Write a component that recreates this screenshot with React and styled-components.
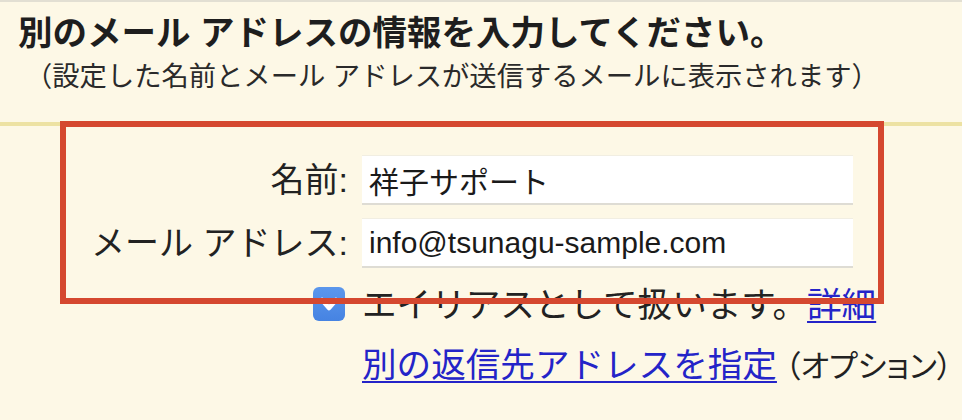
import React from "react";
import styled, { createGlobalStyle } from "styled-components";

const GlobalStyle = createGlobalStyle`
  html, body {
    margin: 0;
    padding: 0;
    background: #fdf8e6;
  }
  body {
    font-family: "Liberation Sans", "Noto Sans CJK JP", sans-serif;
    color: #222;
  }
`;

const Page = styled.div`
  position: relative;
  width: 962px;
  height: 420px;
  overflow: hidden;
  border-top: 2px solid #e2dfd3;
  box-sizing: border-box;
  background: #fdf8e6;
`;

const Header = styled.div`
  padding: 11px 0 0 18px;
`;

const Title = styled.h1`
  margin: 0;
  font-size: 34.5px;
  line-height: 40px;
  font-weight: bold;
  color: #1e1e1e;
`;

const Subtitle = styled.p`
  margin: 7px 0 0 7px;
  font-size: 27.3px;
  line-height: 34px;
  color: #2a2a2a;
  white-space: nowrap;
`;

const Divider = styled.div`
  height: 4px;
  margin-top: 28px;
  background: #ede2a3;
`;

const Form = styled.div`
  display: flex;
  flex-direction: column;
  margin-top: 29px;
`;

const Row = styled.div`
  display: grid;
  grid-template-columns: 348px 1fr;
  column-gap: 14px;
  align-items: center;
  height: ${(p) => p.$h || 50}px;
  margin-top: ${(p) => p.$mt || 0}px;
`;

const Label = styled.div`
  text-align: right;
  font-size: 34px;
  line-height: 40px;
  white-space: nowrap;
`;

const Input = styled.div`
  width: 491px;
  height: 100%;
  box-sizing: border-box;
  background: #fff;
  border-top: 1px solid #f1eee2;
  border-bottom: 2px solid #dedcd4;
  padding-left: 7px;
  display: flex;
  align-items: center;
  font-size: 30px;
  color: #1a1a1a;
  white-space: nowrap;
`;

const CheckCell = styled.div`
  justify-self: end;
  margin-right: 3px;
  display: flex;
  margin-top: -3px;
`;

const CheckBox = styled.span`
  width: 32px;
  height: 34px;
  border-radius: 6px;
  background: linear-gradient(#5b97ec, #4683e2);
  display: flex;
  align-items: center;
  justify-content: center;
`;

const Value = styled.div`
  font-size: 34.6px;
  line-height: 40px;
  white-space: nowrap;
`;

const Link = styled.a`
  color: #2424c8;
  text-decoration: underline;
  text-decoration-thickness: 2px;
  text-underline-offset: 4px;
  cursor: pointer;
`;

const Note = styled.span`
  font-size: 31px;
  margin-left: 8px;
  color: #222;
  font-feature-settings: "palt";
`;

const Highlight = styled.div`
  position: absolute;
  left: 60px;
  top: 119px;
  width: 824px;
  height: 183px;
  border: 6px solid #d5482f;
  box-sizing: border-box;
  pointer-events: none;
`;

const Check = () => (
  <svg width="22" height="18" viewBox="0 0 22 18">
    <path
      d="M4 5 L11 13 L18 5"
      fill="none"
      stroke="#fff"
      strokeWidth="4.5"
      strokeLinecap="round"
      strokeLinejoin="round"
    />
  </svg>
);

export default function App() {
  return (
    <>
      <GlobalStyle />
      <Page>
        <Header>
          <Title>別のメール アドレスの情報を入力してください。</Title>
          <Subtitle>（設定した名前とメール アドレスが送信するメールに表示されます）</Subtitle>
        </Header>
        <Divider />
        <Form>
          <Row>
            <Label>名前:</Label>
            <Input>祥子サポート</Input>
          </Row>
          <Row $mt={13}>
            <Label>メール アドレス:</Label>
            <Input>info@tsunagu-sample.com</Input>
          </Row>
          <Row $h={40} $mt={17}>
            <CheckCell>
              <CheckBox>
                <Check />
              </CheckBox>
            </CheckCell>
            <Value>
              エイリアスとして扱います。<Link>詳細</Link>
            </Value>
          </Row>
          <Row $h={40} $mt={20}>
            <span />
            <Value>
              <Link>別の返信先アドレスを指定</Link>
              <Note>（オプション）</Note>
            </Value>
          </Row>
        </Form>
        <Highlight />
      </Page>
    </>
  );
}
